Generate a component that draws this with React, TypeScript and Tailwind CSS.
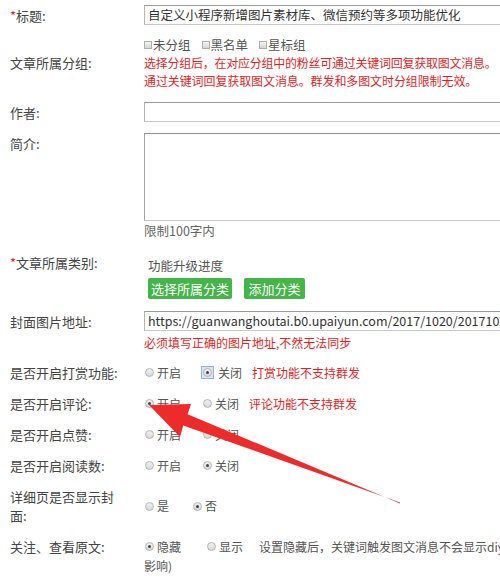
import React from 'react';

const font = "font-['Noto_Sans_CJK_SC','Noto_Sans',sans-serif]";

const Label = ({ children, req }: { children: React.ReactNode; req?: boolean }) => (
  <div className="w-[144px] shrink-0 pl-[10px] pr-[20px] text-[13px] leading-[19px] text-[#444]">
    {req && <span className="text-[#e61e1e]">*</span>}
    {children}
  </div>
);

const Radio = ({ checked, focus }: { checked?: boolean; focus?: boolean }) => (
  <span
    className={
      focus
        ? 'flex items-center justify-center w-[13px] h-[13px] -ml-[2px] mr-[1px] bg-[#d6e4f5] border border-[#8eb1de]'
        : 'flex items-center justify-center w-[9px] h-[9px]'
    }
  >
    <span className="flex items-center justify-center w-[9px] h-[9px] rounded-full border border-[#b4b4b4] bg-gradient-to-b from-[#f2f2f2] to-[#d8d8d8]">
      {checked && <span className="w-[3px] h-[3px] rounded-full bg-[#444]" />}
    </span>
  </span>
);

const Opt = ({ text, checked, focus, className = '' }: { text: string; checked?: boolean; focus?: boolean; className?: string }) => (
  <div className={`flex items-center ${className}`}>
    <Radio checked={checked} focus={focus} />
    <span className="ml-[3px] text-[12px] text-[#555]">{text}</span>
  </div>
);

const Check = ({ text, className = '' }: { text: string; className?: string }) => (
  <div className={`flex items-center ${className}`}>
    <span className="w-[8px] h-[8px] border border-[#b0b0b0] bg-gradient-to-b from-[#f4f4f4] to-[#d6d6d6]" />
    <span className="ml-[1px] text-[12.5px] text-[#555]">{text}</span>
  </div>
);

const inputCls =
  'h-[20px] w-[380px] shrink-0 border border-[#c8c8c8] border-t-[#9a9a9a] border-l-[#b4b4b4] bg-white px-[3px] text-[12.5px] leading-[18px] text-[#333] whitespace-nowrap overflow-hidden';

export default function App() {
  return (
    <div className={`relative w-[500px] h-[578px] overflow-hidden bg-white ${font}`}>
      {/* 标题 */}
      <div className="flex items-center h-[30px]">
        <Label req>标题:</Label>
        <div className={inputCls}>自定义小程序新增图片素材库、微信预约等多项功能优化</div>
      </div>

      {/* 分组 */}
      <div className="flex items-center mt-[5px]">
        <Label>文章所属分组:</Label>
        <div>
          <div className="flex items-center h-[18px] mt-[1px] gap-[11px]">
            <Check text="未分组" />
            <Check text="黑名单" />
            <Check text="星标组" />
          </div>
          <div className="text-[12px] leading-[18px] tracking-[-0.25px] text-[#e61e1e] whitespace-nowrap">
            选择分组后，在对应分组中的粉丝可通过关键词回复获取图文消息。
          </div>
          <div className="text-[12px] leading-[18px] tracking-[-0.1px] text-[#e61e1e] whitespace-nowrap">
            通过关键词回复获取图文消息。群发和多图文时分组限制无效。
          </div>
        </div>
      </div>

      {/* 作者 */}
      <div className="flex items-center mt-[12px] h-[20px]">
        <Label>作者:</Label>
        <div className={inputCls} />
      </div>

      {/* 简介 */}
      <div className="flex items-start mt-[11px]">
        <div className="pt-[1px]">
          <Label>简介:</Label>
        </div>
        <div>
          <div className="h-[88px] w-[380px] border border-[#c8c8c8] border-t-[#8f8f8f] border-l-[#a4a4a4] bg-white" />
          <div className="text-[12.5px] leading-[20px] text-[#666]">限制100字内</div>
        </div>
      </div>

      {/* 类别 */}
      <div className="flex items-start">
        <div className="pt-[12px]">
          <Label req>文章所属类别:</Label>
        </div>
        <div className="pt-[16px] pl-[4px]">
          <div className="text-[12.5px] leading-[18px] text-[#555]">功能升级进度</div>
          <div className="flex gap-[12px] mt-[3px]">
            <button className="h-[21px] w-[84px] rounded-[2px] bg-[#44b549] text-[13px] leading-[21px] text-white">选择所属分类</button>
            <button className="h-[21px] w-[61px] rounded-[2px] bg-[#44b549] text-[13px] leading-[21px] text-white">添加分类</button>
          </div>
        </div>
      </div>

      {/* 封面 */}
      <div className="flex items-start mt-[12px]">
        <div className="h-[20px] flex items-center">
          <Label>封面图片地址:</Label>
        </div>
        <div>
          <div className={inputCls}>https://guanwanghoutai.b0.upaiyun.com/2017/1020/20171020</div>
          <div className="mt-[2px] text-[12px] leading-[20px] text-[#e61e1e]">必须填写正确的图片地址,不然无法同步</div>
        </div>
      </div>

      {/* radio rows */}
      <div className="mt-[4px]">
        <div className="flex items-center h-[31px]">
          <Label>是否开启打赏功能:</Label>
          <Opt text="开启" className="ml-[1px]" />
          <Opt text="关闭" checked focus className="ml-[22px]" />
          <span className="ml-[10px] text-[12px] text-[#e61e1e]">打赏功能不支持群发</span>
        </div>
        <div className="flex items-center h-[31px]">
          <Label>是否开启评论:</Label>
          <Opt text="开启" checked className="ml-[1px]" />
          <Opt text="关闭" className="ml-[22px]" />
          <span className="ml-[10px] text-[12px] text-[#e61e1e]">评论功能不支持群发</span>
        </div>
        <div className="flex items-center h-[31px]">
          <Label>是否开启点赞:</Label>
          <Opt text="开启" className="ml-[1px]" />
          <Opt text="关闭" className="ml-[22px]" />
        </div>
        <div className="flex items-center h-[31px]">
          <Label>是否开启阅读数:</Label>
          <Opt text="开启" className="ml-[1px]" />
          <Opt text="关闭" checked className="ml-[22px]" />
        </div>
      </div>

      {/* 详细页 */}
      <div className="flex items-center mt-[6px]">
        <Label>详细页是否显示封面:</Label>
        <Opt text="是" className="ml-[1px]" />
        <Opt text="否" checked className="ml-[24px]" />
      </div>

      {/* 关注 */}
      <div className="flex items-start mt-[12px]">
        <Label>关注、查看原文:</Label>
        <div className="text-[12px] leading-[19px] text-[#555]">
          <div className="flex items-center h-[19px] whitespace-nowrap">
            <Opt text="隐藏" checked className="ml-[1px]" />
            <Opt text="显示" className="ml-[26px]" />
            <span className="ml-[16px]">设置隐藏后，关键词触发图文消息不会显示diy菜单</span>
          </div>
          <div>影响)</div>
        </div>
      </div>

      {/* red annotation arrow */}
      <svg className="absolute left-0 top-0 pointer-events-none" width="500" height="578" viewBox="0 0 500 578">
        <polygon
          fill="#ee2b2b"
          points="149,405 191,404 187.6,414.2 400,503.5 400,502.5 183.2,425.4 180,437"
        />
      </svg>
    </div>
  );
}
